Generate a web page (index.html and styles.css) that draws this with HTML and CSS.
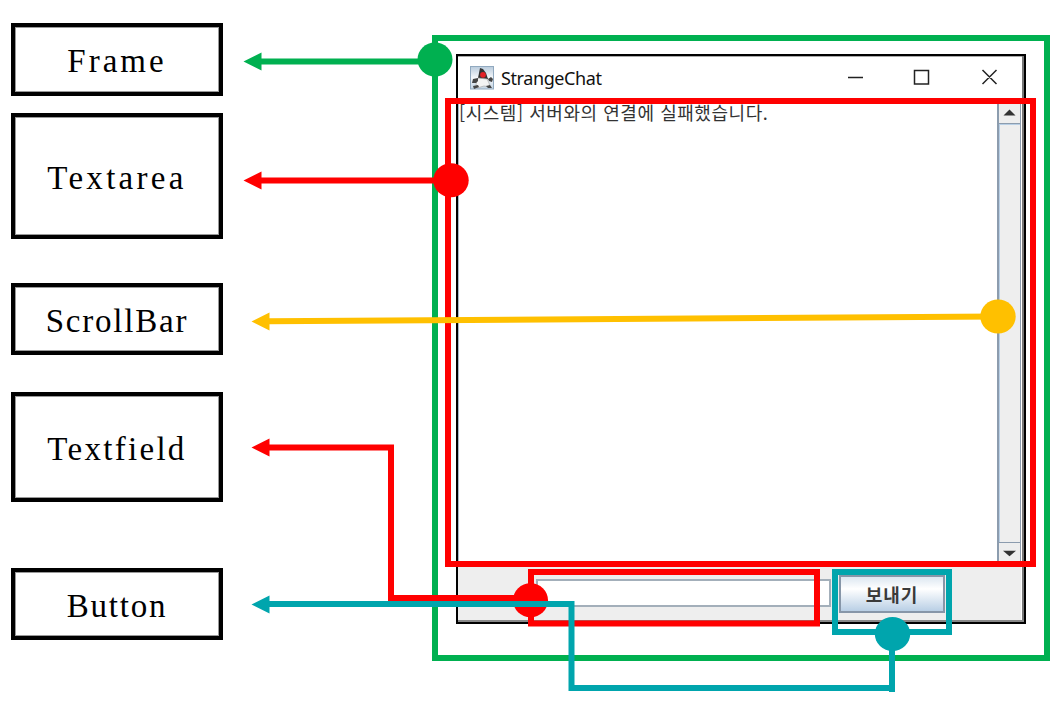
FILE: index.html
```
<!DOCTYPE html>
<html lang="ko">
<head>
  <meta charset="UTF-8">
  <title>StrangeChat</title>
  <link rel="stylesheet" href="styles.css">
</head>
<body>

<div class="page">
  <div class="labels">
    <div class="label frame">Frame</div>
    <div class="label textarea">Textarea</div>
    <div class="label scroll">ScrollBar</div>
    <div class="label textfield">Textfield</div>
    <div class="label button">Button</div>
  </div>

  <div class="window">
    <div class="titlebar">
      <svg class="java" viewBox="0 0 24 24">
        <defs>
          <linearGradient id="tile" x1="0" y1="0" x2="0" y2="1">
            <stop offset="0" stop-color="#b9cbdc"/>
            <stop offset=".5" stop-color="#f4f7fa"/>
            <stop offset="1" stop-color="#c3d3e2"/>
          </linearGradient>
        </defs>
        <rect x=".5" y=".5" width="23" height="22.5" fill="url(#tile)" stroke="#91a9bf"/>
        <path d="M10 2l3 1 3 4 2 6-4 1-6-2 1-5z" fill="#333"/>
        <path d="M8 12l9 1 2 4 1 4-6-1-7 2-1-4z" fill="#f3f3f3" stroke="#aaa" stroke-width=".7"/>
        <path d="M8 12l-5 1-1 4 4 0 2-2zM18 13l3-2 2 2-1 3-3-1zM3 20l5-1 1 2-5 2zM16 20l4-1 2 3-4 0z" fill="#454545"/>
        <circle cx="13" cy="8.800" r="2.900" fill="#e32227"/>
      </svg>
      <span class="name">StrangeChat</span>
      <svg class="controls" viewBox="0 0 152 18">
        <path d="M1 8.500h15M67.500 1.500h14v13.500h-14zM135.500 1l14 14M149.500 1l-14 14" fill="none" stroke="#222" stroke-width="1.5"/>
      </svg>
    </div>
    <div class="chat">
      <div class="log">[시스템] 서버와의 연결에 실패했습니다.</div>
      <div class="scrollbar">
        <div class="step"><svg viewBox="0 0 12 7"><path d="M0 6.500L6 .5l6 6z"/></svg></div>
        <div class="thumb"></div>
        <div class="step"><svg viewBox="0 0 14 7"><path d="M0 .5h14l-7 6z"/></svg></div>
      </div>
    </div>
    <div class="footer">
      <div class="field"></div>
      <div class="send">보내기</div>
    </div>
    <div class="fringe"></div>
  </div>

  <!-- outlines and arrows that lie over the window -->
  <svg class="marks" viewBox="0 0 1060 710">
    <g class="green">
      <rect x="435" y="38" width="612" height="620"/>
      <path d="M260 61.500H435"/>
      <path class="solid" d="M243.500 61.500l18-9v18z"/>
      <ellipse class="solid" cx="435" cy="59.500" rx="17.500" ry="17"/>
    </g>
    <g class="red">
      <rect x="448" y="101" width="585" height="463"/>
      <path d="M260 180.500H451"/>
      <path class="solid" d="M243.500 180.500l18-9v18z"/>
      <ellipse class="solid" cx="451" cy="180.300" rx="17.700" ry="17"/>
      <rect x="531" y="572" width="286" height="51.500"/>
      <path d="M268 447.500H391V598H531"/>
      <path class="solid" d="M251.500 447.500l18-9v18z"/>
      <ellipse class="solid" cx="530.500" cy="600.300" rx="17.500" ry="17"/>
    </g>
    <g class="yellow">
      <path d="M268 321.300L998 316.500"/>
      <path class="solid" d="M251.500 321.500l18-9v18z"/>
      <ellipse class="solid" cx="998" cy="316.500" rx="17.700" ry="17"/>
    </g>
    <g class="teal">
      <rect x="835" y="572" width="114" height="60"/>
      <path d="M268 604H571.500V688H892M892 692V634"/>
      <path class="solid" d="M251.500 604.500l18-9v18z"/>
      <ellipse class="solid" cx="892.500" cy="634" rx="17.700" ry="17"/>
    </g>
  </svg>
</div>

</body>
</html>
```
FILE: styles.css
```
* {
  box-sizing: border-box;
}

body {
  margin: 0;
  background: #fff;
}

.page {
  position: relative;
  display: flex;
  align-items: flex-start;
  width: 1060px;
  height: 710px;
  padding-left: 11px;
  overflow: hidden;
}

.labels {
  width: 212px;
  margin-right: 233px;
  padding-top: 23px;
  font-family: "Liberation Serif", serif;
  font-size: 33px;
}

.label {
  display: flex;
  align-items: center;
  justify-content: center;
  height: 72px;
  padding-top: 4px;
  border: 4px solid #000;
  box-shadow: inset 0 0 0 1px #999;
}

.frame {
  height: 73px;
  letter-spacing: 3px;
}

.textarea {
  height: 126px;
  margin-top: 17px;
  letter-spacing: 3.3px;
}

.scroll {
  margin-top: 44px;
  letter-spacing: 1.8px;
}

.textfield {
  height: 110px;
  margin-top: 37px;
  letter-spacing: 2.3px;
}

.button {
  margin-top: 66px;
  letter-spacing: 1.8px;
}

.window {
  display: flex;
  flex-direction: column;
  width: 570px;
  height: 570px;
  margin-top: 54px;
  border: 2px solid #000;
  box-shadow: inset -2px 0 0 #777, inset 0 1px 0 #aaa;
}

.titlebar {
  display: flex;
  align-items: center;
  height: 46px;
  padding: 0 25px 3px 12px;
}

.java {
  width: 24px;
  height: 24px;
}

.name {
  margin-left: 7px;
  font: 18px "Noto Sans", sans-serif;
  letter-spacing: -0.4px;
  color: #111;
}

.controls {
  width: 152px;
  height: 18px;
  margin-left: auto;
}

.chat {
  display: flex;
  height: 462px;
  margin-right: 3px;
  border-left: 1px solid #a9b9ca;
}

.log {
  flex: 1;
  font: 18px/20px "Noto Sans CJK KR", sans-serif;
  letter-spacing: 0.55px;
  color: #333;
}

.scrollbar {
  display: flex;
  flex-direction: column;
  width: 24px;
  background: #eee;
  border: solid #8c9cae;
  border-width: 0 1px 0 2px;
}

.step {
  display: flex;
  align-items: center;
  justify-content: center;
  height: 21px;
}

.step svg {
  width: 13px;
  height: 7px;
  fill: #333;
}

.thumb {
  flex: 1;
  border: solid #8c9cae;
  border-width: 1px 0;
  box-shadow: inset 1px 1px 0 #b8cfe5;
}

.footer {
  display: flex;
  flex: 1;
  margin-right: 3px;
  padding: 11px 0 0 78px;
  background: #eee;
}

.field {
  width: 295px;
  height: 28px;
  margin-top: 4px;
  border: 2px solid #a3afba;
  background: #fff;
}

.send {
  width: 106px;
  height: 38px;
  margin-left: 8px;
  border: 2px solid #8796a8;
  background: linear-gradient(#dce7f1, #fff 35%, #b9cfe5);
  font: bold 18px/34px "Noto Sans CJK KR", sans-serif;
  letter-spacing: 1px;
  color: #3a3a3a;
  text-align: center;
}

.fringe {
  height: 2px;
  background: #888;
}

.marks {
  position: absolute;
  left: 0;
  top: 0;
  width: 1060px;
  height: 710px;
  fill: none;
  stroke-width: 6;
}

.marks .solid {
  stroke: none;
}

.green {
  stroke: #00b050;
}

.green .solid {
  fill: #00b050;
}

.yellow {
  stroke: #ffc000;
}

.yellow .solid {
  fill: #ffc000;
}

.red {
  stroke: #f00;
}

.red .solid {
  fill: #f00;
}

.teal {
  stroke: #00a5ad;
}

.teal .solid {
  fill: #00a5ad;
}
```
